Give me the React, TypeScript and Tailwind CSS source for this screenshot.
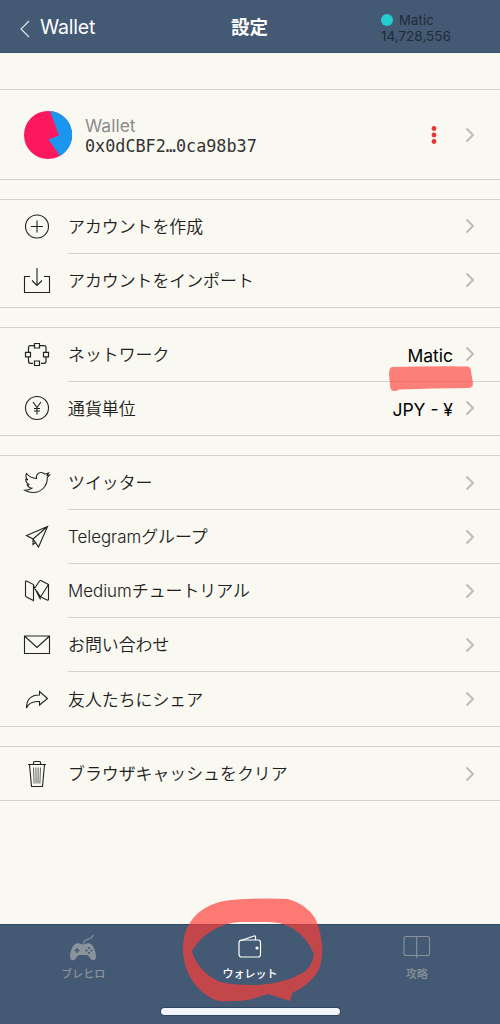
import React from "react";

type IconProps = { children: React.ReactNode; width?: number };

const Icon: React.FC<IconProps> = ({ children, width = 1.1 }) => (
  <svg
    viewBox="0 0 28 28"
    className="h-7 w-7 shrink-0"
    fill="none"
    stroke="#222"
    strokeWidth={width}
  >
    {children}
  </svg>
);

const icons = {
  create: (
    <Icon>
      <circle cx="14" cy="13.500" r="11.5" />
      <path d="M8 13.500h12M14 7.500v12" />
    </Icon>
  ),
  download: (
    <Icon>
      <path d="M7 10.5H1.5v16h25v-16H21M14 2v17M9 14.500l5 5 5-5" />
    </Icon>
  ),
  network: (
    <Icon width={1.2}>
      <path d="M11.500 2.500h5v4.500h-5zM11.500 20h5v4.500h-5zM2.500 11.300h5v4.500h-5zM20.500 11.300h5v4.500h-5z" />
      <path d="M11.500 4.700H7.500a2 2 0 0 0-2 2v4.500M16.500 4.700h4.500a2 2 0 0 1 2 2v4.500M5.500 16v4.300a2 2 0 0 0 2 2h2.500M23 16v4.300a2 2 0 0 1-2 2h-3" />
    </Icon>
  ),
  yen: (
    <Icon>
      <circle cx="14" cy="14" r="11.5" />
      <path d="M10 8l4 5.500L18 8M14 13.500v7M11 14.500h6M11 17h6" />
    </Icon>
  ),
  twitter: (
    <Icon>
      <path d="M3.500 4.500c2.500 3 6 4.700 10 5C13 6 15 3.500 18.200 3.500c1.700 0 2.800.6 3.800 1.700l3.600-1.200-1.500 2.500 2.400-.5-2.200 2.500c.2 8-5.500 15-14 15-3.500 0-6-.8-8.500-2.300 3 0 5-.5 7-2-2.500-.4-3.800-1.500-4.500-3.500h2C4 14.500 2.800 13 2.800 10.500l2 .5C3 9.500 2.500 7 3.500 4.500z" />
    </Icon>
  ),
  telegram: (
    <Icon>
      <path d="M24.500 3.500L3.500 12.500l6.500 3.500 5.500 8zM24.500 3.500L10 16v5.500l3-2.500" />
    </Icon>
  ),
  medium: (
    <Icon>
      <path d="M3.500 4l7 3.500v16l-7-3.500q-1-.5-1-1.500v-13q0-2 1-1.500zM10.500 8.500l7 14M10.500 13l6-9q.5-.8 1.300-.4l7.700 3.900-8 12.500-4-6.500M25.500 7.500v14.500q0 1.500-1.500 1l-6-3" />
    </Icon>
  ),
  mail: (
    <Icon>
      <path d="M1.500 5h25v17.500h-25zM2 5.500l12 11 12-11" />
    </Icon>
  ),
  share: (
    <Icon>
      <path d="M3.500 23c0-8 4-13 13-13V6.500l8 7-8 6.500v-3.500c-7-.5-11 1.500-13 6.500z" />
    </Icon>
  ),
  trash: (
    <Icon>
      <path d="M5 4.500h18M6.500 4.500l2 22h11l2-22M10.500 4.500V2.500q0-1 1-1h5q1 0 1 1v2" />
      <path d="M10.500 7.500l.6 16M12.900 7.500l.2 16M15.200 7.500l-.2 16M17.500 7.500l-.6 16" strokeWidth="0.7" />
    </Icon>
  ),
};

type Item = { icon: React.ReactNode; label: string; value?: string };

const accountItems: Item[] = [
  { icon: icons.create, label: "アカウントを作成" },
  { icon: icons.download, label: "アカウントをインポート" },
];

const networkItems: Item[] = [
  { icon: icons.network, label: "ネットワーク", value: "Matic" },
  { icon: icons.yen, label: "通貨単位", value: "JPY - ¥" },
];

const linkItems: Item[] = [
  { icon: icons.twitter, label: "ツイッター" },
  { icon: icons.telegram, label: "Telegramグループ" },
  { icon: icons.medium, label: "Mediumチュートリアル" },
  { icon: icons.mail, label: "お問い合わせ" },
  { icon: icons.share, label: "友人たちにシェア" },
];

const cacheItems: Item[] = [
  { icon: icons.trash, label: "ブラウザキャッシュをクリア" },
];

const Chevron = () => (
  <svg viewBox="0 0 10 16" className="h-4 w-2.5 shrink-0" fill="none" stroke="#bdbcb9" strokeWidth="2">
    <path d="M1.500 1.500L8 8l-6.500 6.500" />
  </svg>
);

const Row: React.FC<{ item: Item; last: boolean }> = ({ item, last }) => (
  <div className="flex min-h-0 flex-1 items-stretch">
    <div className="flex w-[68px] items-center pl-[23px]">{item.icon}</div>
    <div
      className={
        last
          ? "flex flex-1 items-center pr-[25px]"
          : "flex flex-1 items-center border-b border-[#d3d2ce] pr-[25px]"
      }
    >
      <span className="flex-1 whitespace-nowrap pt-[3px] text-[16.9px] font-[350]">{item.label}</span>
      {item.value && (
        <span className="mr-3 whitespace-nowrap pt-[3px] text-[17.5px] text-black">
          {item.value}
        </span>
      )}
      <Chevron />
    </div>
  </div>
);

const Section: React.FC<{ items: Item[]; className: string }> = ({ items, className }) => (
  <section className={`mt-[19px] flex flex-col border-y border-[#d3d2ce] ${className}`}>
    {items.map((item, i) => (
      <Row key={item.label} item={item} last={i === items.length - 1} />
    ))}
  </section>
);

const Header = () => (
  <header className="flex h-[53px] shrink-0 border-b border-[#38506b] bg-[#445a74] text-white">
    <div className="flex w-[231px] items-start pl-5 pt-[14px]">
      <svg viewBox="0 0 10 18" className="mt-[6px] h-[18px] w-2.5" fill="none" stroke="#e5ebf2" strokeWidth="1.1">
        <path d="M9 1L1 9l8 8" />
      </svg>
      <span className="ml-[10px] text-[19.5px] leading-[26px] tracking-[-0.2px]">Wallet</span>
    </div>
    <h1 className="w-[149px] pt-[14px] text-[18.500px] font-bold leading-[26px]">設定</h1>
    <div className="pt-[12px] text-[13.500px] leading-4 text-[#202b38]">
      <div className="flex items-center">
        <span className="ml-px mr-[6px] h-3 w-3 rounded-full bg-[#25cdd1]" />
        <span className="text-[13px] tracking-[0.2px]">Matic</span>
      </div>
      <div className="ml-px">14,728,556</div>
    </div>
  </header>
);

const Account = () => (
  <section className="mt-9 flex h-[91px] shrink-0 items-center border-y border-[#d3d2ce] pl-6 pr-[25px]">
    <svg viewBox="0 0 48 48" className="h-12 w-12">
      <circle cx="24" cy="24" r="24" fill="#fb185f" />
      <path d="M26 0A24 24 0 0 1 36 44.800L24.500 28.500 35 24.500z" fill="#1b96ef" />
    </svg>
    <div className="ml-[13px] flex-1 pt-[3px]">
      <div className="text-[17.500px] leading-[20px] text-[#8d8c8a]">Wallet</div>
      <div className="font-['DejaVu_Sans_Mono',monospace] text-[16.8px] leading-[21px] text-[#333]">
        0x0dCBF2…0ca98b37
      </div>
    </div>
    <svg viewBox="0 0 6 20" className="mr-[28px] h-5 w-[6px]" fill="#ed3437">
      <circle cx="3" cy="3.500" r="2.400" />
      <circle cx="3" cy="10" r="2.400" />
      <circle cx="3" cy="16.500" r="2.400" />
    </svg>
    <Chevron />
  </section>
);

const TabBar = () => (
  <nav className="flex h-[100px] shrink-0 flex-col border-t border-[#2d4966] bg-[#445a74] text-[11px] font-medium text-[#8a929b]">
    <div className="grid h-[83px] grid-cols-3">
      <div className="flex flex-col items-center pt-[9px]">
        <svg viewBox="0 0 28 28" className="h-7 w-7">
          <path d="M14.500 9.500c0-5 8.500-3 9.500-8.500" fill="none" stroke="#8a929b" strokeWidth="1.300" />
          <path d="M7 9.500c2-.8 4-.2 5 .8h4c1-1 3-1.600 5-.8 3 1.200 6 8 6 13 0 3-1.800 4.500-4 3.500-2-1-3-4-5-5h-8c-2 1-3 4-5 5-2.200 1-4-.5-4-3.500 0-5 3-11.800 6-13z" fill="#8a929b" />
          <path d="M5.500 16.500h5M8 14v5" stroke="#445a74" strokeWidth="1.600" />
          <g fill="#445a74">
            <circle cx="20" cy="14" r="1.100" />
            <circle cx="20" cy="19" r="1.100" />
            <circle cx="17.500" cy="16.500" r="1.100" />
            <circle cx="22.500" cy="16.500" r="1.100" />
          </g>
        </svg>
        <span className="mt-1 leading-4">ブレヒロ</span>
      </div>
      <div className="flex flex-col items-center pt-[9px] text-white">
        <svg viewBox="0 0 28 28" className="h-7 w-7" fill="none" stroke="white" strokeWidth="1.200">
          <rect x="3" y="6" width="21.500" height="17" rx="2.500" />
          <path d="M3.500 7L18 2q1.500-.5 1.500 1V6" />
          <circle cx="21" cy="14" r="1" fill="white" />
        </svg>
        <span className="mt-1 leading-4">ウォレット</span>
      </div>
      <div className="flex flex-col items-center pt-[9px]">
        <svg viewBox="0 0 28 28" className="h-7 w-7" fill="none" stroke="#8a929b" strokeWidth="1.100">
          <rect x="1" y="2.500" width="25.500" height="19" rx="2" />
          <path d="M13.700 2.500v21.500" />
        </svg>
        <span className="mt-1 leading-4">攻略</span>
      </div>
    </div>
    <div className="mx-auto h-[7px] w-[179px] rounded-full bg-[#f4f5fb] ring-1 ring-[#2c4663]" />
  </nav>
);

// Marker strokes drawn over the screen
const Markers = () => (
  <>
    <svg viewBox="0 0 88 28" className="pointer-events-none absolute left-[387px] top-[364px] h-7 w-[88px] overflow-visible blur-[0.6px]">
      <path d="M5 3Q45 2 80 2.500q4 0 4 5l2 12q0 4-4 4.500-35 0-70 1.500-2 2-6 1.500-3-1-3-7L2 10q0-6 3-7z" fill="#ff4640" fillOpacity="0.680" />
    </svg>
    <svg viewBox="0 0 144 108" className="pointer-events-none absolute left-[181px] top-[896px] h-[108px] w-36 overflow-visible blur-[0.7px]">
      <path
        d="M50 4Q78 1.500 107 3q18 5 27 19 6 12 7 28 1 17-5 27-9 13-25 20l-2 8-22-7q-10 3-16 5-12 3-34 2Q18 98 8 79 1 65 2 48 3 32 14 20 28 6 50 4zM59 26Q38 27 20 43q-8 9-9 13 7 20 26 29 10 4 38 4 28-2 42-10Q130 75 133 58 126 41 111 32q-10-6-24-6z"
        fill="#ff3d38"
        fillOpacity="0.680"
        fillRule="evenodd"
      />
    </svg>
  </>
);

const App: React.FC = () => {
  return (
    <div className="relative flex h-[1024px] w-[500px] flex-col overflow-hidden bg-[#f9f8f1] font-[Inter,'Noto_Sans_CJK_JP',sans-serif] text-[#202020]">
      <Header />
      <main className="flex flex-1 flex-col">
        <Account />
        <Section items={accountItems} className="h-[109px]" />
        <Section items={networkItems} className="h-[109px]" />
        <Section items={linkItems} className="h-[272px]" />
        <Section items={cacheItems} className="h-[55px]" />
      </main>
      <TabBar />
      <Markers />
    </div>
  );
};

export default App;
